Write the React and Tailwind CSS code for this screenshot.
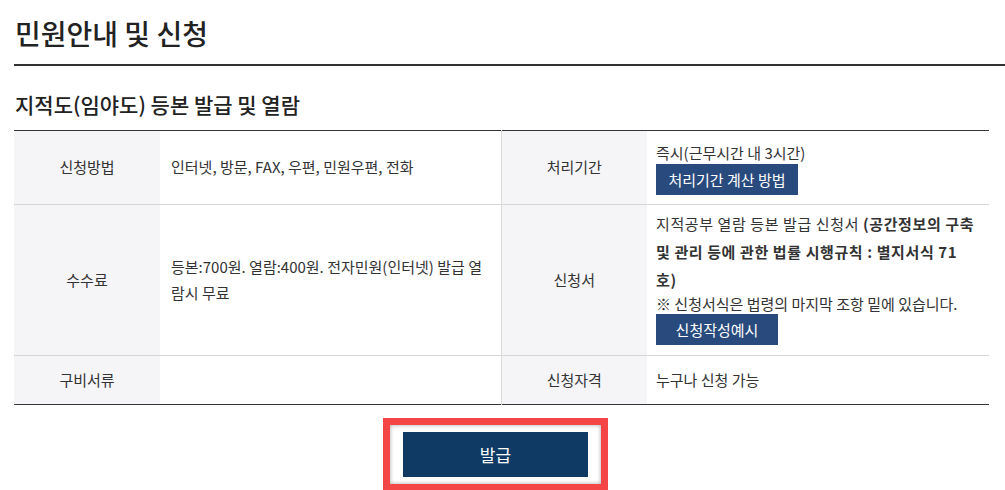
import React from "react";

const font = { fontFamily: '"Noto Sans CJK KR", "Noto Sans", sans-serif' };

function Label({ children, border }) {
  return (
    <th
      className={`w-[146px] bg-[#f5f5f7] text-center font-normal text-[15px] text-[#333] align-middle ${border ? "border-l border-[#dcdcdc]" : ""}`}
    >
      {children}
    </th>
  );
}

function SmallBtn({ children, w }) {
  return (
    <button className={`block h-[31px] ${w} bg-[#284a7c] text-white text-[15px] leading-[31px] text-center`}>
      {children}
    </button>
  );
}

export default function App() {
  const rows = "border-b border-[#d6d6d6]";
  return (
    <div className="w-[1005px] h-[490px] bg-white overflow-hidden text-[#333]" style={font}>
      <div className="pl-[14px]">
        <h1 className="pt-[14px] pb-[12px] pl-[1px] text-[28px] leading-[38px] font-medium text-[#222]">
          민원안내 및 신청
        </h1>
        <div className="h-[2px] bg-[#333]" />
        <h2 className="pt-[23px] pb-[11px] pl-[1px] text-[21px] leading-[30px] font-medium text-[#222]">
          지적도(임야도) 등본 발급 및 열람
        </h2>
        <table className="w-[975px] border-t border-b border-t-[#333] border-b-[#333] border-collapse text-[15px]">
          <tbody>
            <tr className={`h-[74px] ${rows}`}>
              <Label>신청방법</Label>
              <td className="w-[341px] pl-[11px] text-[15px]">인터넷, 방문, FAX, 우편, 민원우편, 전화</td>
              <Label border>처리기간</Label>
              <td className="pl-[9px] pt-[2px] align-top">
                <div className="pt-[9px] leading-[22px]">즉시(근무시간 내 3시간)</div>
                <SmallBtn w="w-[142px]">처리기간 계산 방법</SmallBtn>
              </td>
            </tr>
            <tr className={`h-[151px] ${rows}`}>
              <Label>수수료</Label>
              <td className="pl-[11px] pr-[10px] leading-[26px] break-all">
                등본:700원. 열람:400원. 전자민원(인터넷) 발급 열람시 무료
              </td>
              <Label border>신청서</Label>
              <td className="pl-[9px] pr-[4px] align-top pt-[5px] whitespace-nowrap">
                <div className="leading-[28px] tracking-[0.6px]">
                  지적공부 열람 등본 발급 신청서 <b className="font-bold">(공간정보의 구축</b>
                  <br />
                  <b className="font-bold">및 관리 등에 관한 법률 시행규칙 : 별지서식 71</b>
                  <br />
                  <b className="font-bold">호)</b>
                </div>
                <div className="leading-[20px]">※ 신청서식은 법령의 마지막 조항 밑에 있습니다.</div>
                <div>
                  <SmallBtn w="w-[122px]">신청작성예시</SmallBtn>
                </div>
              </td>
            </tr>
            <tr className="h-[49px]">
              <Label>구비서류</Label>
              <td className="pl-[11px]"></td>
              <Label border>신청자격</Label>
              <td className="pl-[9px]">누구나 신청 가능</td>
            </tr>
          </tbody>
        </table>
        <div className="w-[975px] flex justify-center pt-[13px] pr-[12px]">
          <div className="border-[7px] border-[#f44646] px-[13px] py-[7px] shadow-[inset_0_0_4px_rgba(0,0,0,0.35)]">
            <button className="w-[185px] h-[45px] bg-[#0f3a63] text-white text-[17px]">발급</button>
          </div>
        </div>
      </div>
    </div>
  );
}
